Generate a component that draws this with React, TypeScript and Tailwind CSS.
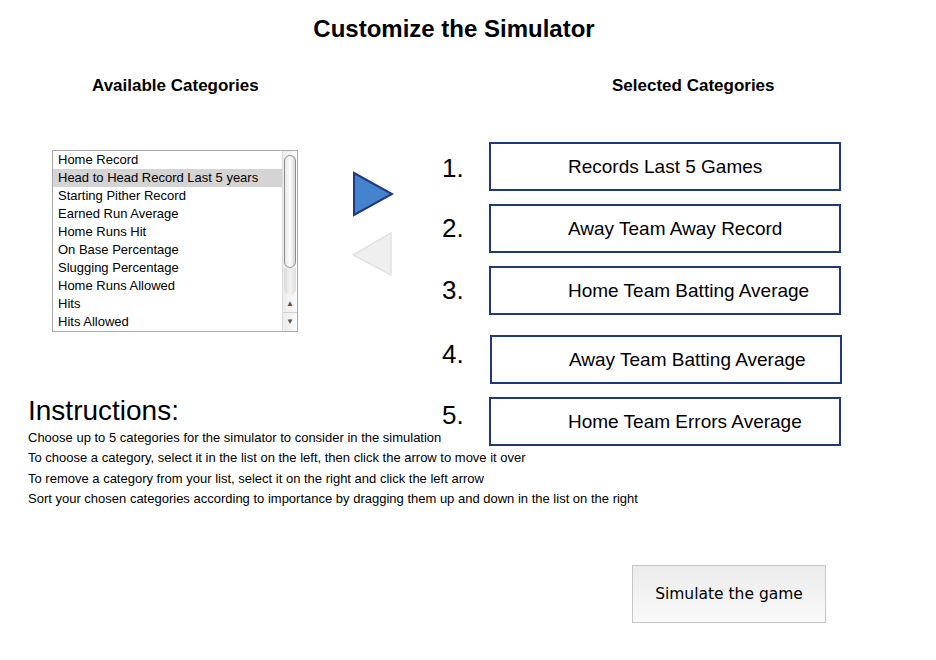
import React from "react";

const available = [
  "Home Record",
  "Head to Head Record Last 5 years",
  "Starting Pither Record",
  "Earned Run Average",
  "Home Runs Hit",
  "On Base Percentage",
  "Slugging Percentage",
  "Home Runs Allowed",
  "Hits",
  "Hits Allowed",
];

const selected = [
  { label: "Records Last 5 Games", numTop: "mt-[13px]", rowMt: "mt-0", boxMl: "ml-0" },
  { label: "Away Team Away Record", numTop: "mt-[11px]", rowMt: "mt-[13px]", boxMl: "ml-0" },
  { label: "Home Team Batting Average", numTop: "mt-[11px]", rowMt: "mt-[13px]", boxMl: "ml-0" },
  { label: "Away Team Batting Average", numTop: "mt-[6px]", rowMt: "mt-[20px]", boxMl: "ml-[1px]" },
  { label: "Home Team Errors Average", numTop: "mt-[5px]", rowMt: "mt-[13px]", boxMl: "ml-0" },
];

const instructions = [
  "Choose up to 5 categories for the simulator to consider in the simulation",
  "To choose a category, select it in the list on the left, then click the arrow to move it over",
  "To remove a category from your list, select it on the right and click the left arrow",
  "Sort your chosen categories according to importance by dragging them up and down in the list on the right",
];

function ListBox() {
  return (
    <div className="flex w-[246px] h-[182px] border border-[#a9a9a9] bg-white">
      <div className="flex-1 flex flex-col">
        {available.map((item, i) => (
          <div
            key={item}
            className={`h-[18px] leading-[18px] text-[13px] pl-[5px] text-black whitespace-nowrap ${
              i === 1 ? "bg-[#d4d4d4]" : ""
            }`}
          >
            {item}
          </div>
        ))}
      </div>
      <div className="w-[15px] flex flex-col border-l border-[#dcdcdc] bg-gradient-to-r from-[#ececec] to-[#fafafa]">
        <div className="pt-[4px] px-[1px]">
          <div className="h-[113px] rounded-full border border-[#8e8e8e] bg-gradient-to-r from-[#e8e8e8] via-white to-[#d6d6d6]" />
        </div>
        <div className="flex-1 mx-[1px] rounded-b-full bg-gradient-to-r from-[#d9d9d9] via-[#f3f3f3] to-[#dedede]" />
        <div className="h-[18px] flex items-center justify-center text-[8px] text-[#555] border-b border-[#d0d0d0]">
          ▲
        </div>
        <div className="h-[18px] flex items-center justify-center text-[8px] text-[#555]">▼</div>
      </div>
    </div>
  );
}

function Arrows() {
  return (
    <svg width="46" height="108" viewBox="0 0 46 108" className="block">
      <polygon points="4,3 42,24 4,45" fill="#4683cf" stroke="#1d3a82" strokeWidth="2" strokeLinejoin="miter" />
      <polygon points="41,63 3,85 41,105" fill="#efefef" stroke="#e2e2e2" strokeWidth="1.5" />
    </svg>
  );
}

export default function App() {
  return (
    <div
      className="w-[936px] h-[660px] bg-white text-black overflow-hidden"
      style={{ fontFamily: '"Liberation Sans", Arial, Helvetica, sans-serif' }}
    >
      <h1 className="pt-[15px] pr-[28px] text-center text-[24px] leading-[28px] font-bold">
        Customize the Simulator
      </h1>

      <div className="flex">
        {/* left column */}
        <div className="w-[440px] shrink-0 flex flex-col">
          <div className="mt-[33px] pl-[92px] text-[17px] leading-[20px] font-bold whitespace-nowrap">
            Available Categories
          </div>
          <div className="mt-[54px] flex items-start pl-[52px]">
            <ListBox />
            <div className="ml-[52px] mt-[20px]">
              <Arrows />
            </div>
          </div>
          <div className="mt-[64px] pl-[28px]">
            <div className="text-[28px] leading-[30px] whitespace-nowrap">Instructions:</div>
            <div className="mt-[2px]">
              {instructions.map((line) => (
                <div key={line} className="text-[13px] leading-[20.3px] whitespace-nowrap">
                  {line}
                </div>
              ))}
            </div>
          </div>
        </div>

        {/* right column */}
        <div className="flex-1 flex flex-col">
          <div className="mt-[33px] pl-[172px] text-[17px] leading-[20px] font-bold whitespace-nowrap">
            Selected Categories
          </div>
          <div className="mt-[46px] flex flex-col">
            {selected.map((s, i) => (
              <div key={s.label} className={`flex items-start ${s.rowMt}`}>
                <div className={`w-[49px] pl-[2px] text-[26px] leading-[26px] ${s.numTop}`}>{i + 1}.</div>
                <div
                  className={`${s.boxMl} w-[352px] h-[49px] border-2 border-[#1f3a7c] flex items-center pl-[77px] pt-[2px] text-[19px] whitespace-nowrap`}
                >
                  {s.label}
                </div>
              </div>
            ))}
          </div>
        </div>
      </div>

      <div className="mt-[56px] pl-[632px]">
        <button
          className="w-[194px] h-[58px] border border-[#c6c6c6] bg-gradient-to-b from-[#ececec] to-[#f9f9f9] text-[15.5px] text-black"
          style={{ fontFamily: '"DejaVu Sans", Verdana, sans-serif' }}
        >
          Simulate the game
        </button>
      </div>
    </div>
  );
}
